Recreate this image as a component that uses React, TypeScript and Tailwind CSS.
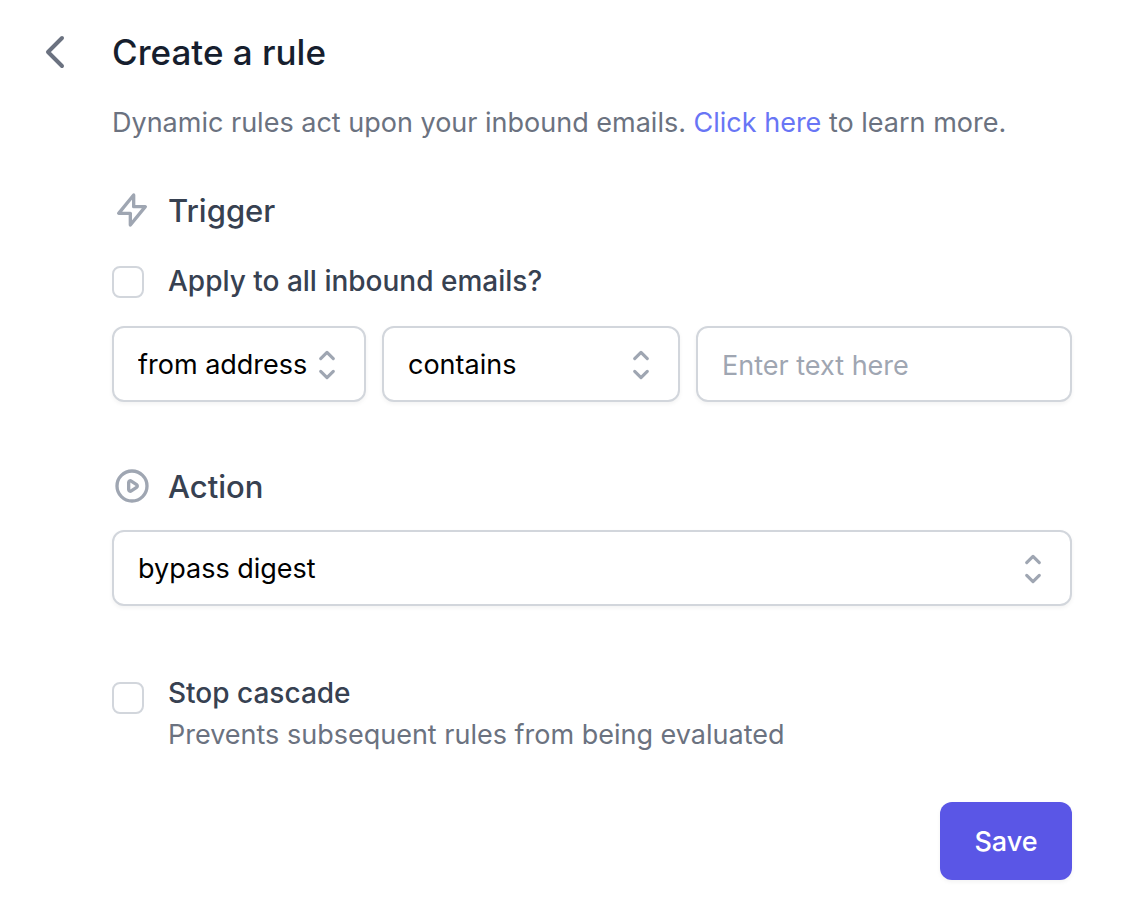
import React, { useState } from 'react';
import { clsx } from 'clsx';

const FIELD_CLASSES =
  'h-[76px] w-full rounded-xl border-2 border-[#d2d6dc] bg-white pt-0.5 pl-6 text-[27px] leading-10 shadow-[0_2px_4px_rgba(0,0,0,0.05)] focus:border-[#a4cafe] focus:outline-none';

interface IconProps {
  className?: string;
  viewBox?: string;
  strokeWidth?: number;
  d: string[];
}

const Icon: React.FC<IconProps> = ({ className, viewBox = '0 0 24 24', strokeWidth = 2, d }) => (
  <svg
    className={className}
    viewBox={viewBox}
    fill="none"
    stroke="currentColor"
    strokeWidth={strokeWidth}
    strokeLinecap="round"
    strokeLinejoin="round"
    aria-hidden="true"
  >
    {d.map((path) => (
      <path key={path} d={path} />
    ))}
  </svg>
);

const CHEVRON_LEFT = ['M15 19l-7-7 7-7'];
const LIGHTNING = ['M13 10V3L4 14h7v7l9-11h-7z'];
const PLAY = [
  'M14.752 11.168l-3.197-2.132A1 1 0 0010 9.87v4.263a1 1 0 001.555.832l3.197-2.132a1 1 0 000-1.664z',
  'M21 12a9 9 0 11-18 0 9 9 0 0118 0z',
];
const SELECTOR = ['M7 7l3-3 3 3m0 6l-3 3-3-3'];

interface SelectProps {
  label: string;
  options: string[];
  value: string;
  onChange: (value: string) => void;
  className?: string;
}

const Select: React.FC<SelectProps> = ({ label, options, value, onChange, className }) => (
  <div className={clsx('grid items-center', className)}>
    <select
      aria-label={label}
      value={value}
      onChange={(e) => onChange(e.target.value)}
      className={clsx(FIELD_CLASSES, 'col-start-1 row-start-1 appearance-none pr-12 text-black')}
    >
      {options.map((option) => (
        <option key={option} value={option}>
          {option}
        </option>
      ))}
    </select>
    <Icon
      className="pointer-events-none col-start-1 row-start-1 mt-0.5 mr-[18px] size-[42px] justify-self-end text-[#9fa6b2]"
      viewBox="0 0 20 20"
      strokeWidth={1.5}
      d={SELECTOR}
    />
  </div>
);

interface CheckboxProps {
  id: string;
  label: string;
  hint?: string;
  checked: boolean;
  onChange: (checked: boolean) => void;
  className?: string;
}

const Checkbox: React.FC<CheckboxProps> = ({ id, label, hint, checked, onChange, className }) => (
  <div className={clsx('flex items-start gap-6', className)}>
    <input
      id={id}
      type="checkbox"
      checked={checked}
      onChange={(e) => onChange(e.target.checked)}
      aria-describedby={hint ? `${id}-hint` : undefined}
      className={clsx(
        'size-8 shrink-0 appearance-none rounded-lg border-2 border-[#d2d6dc] bg-white checked:border-[#5a56e6] checked:bg-[#5a56e6]',
        hint ? 'mt-2.5' : 'mt-1.5'
      )}
    />
    <div className="leading-[42px]">
      <label htmlFor={id} className="block text-[28px] leading-[42px] font-medium text-[#374151]">
        {label}
      </label>
      {hint && (
        <p id={`${id}-hint`} className="text-[27px] leading-[42px] text-[#6b7280]">
          {hint}
        </p>
      )}
    </div>
  </div>
);

const SectionHeading: React.FC<{ icon: string[]; children: React.ReactNode }> = ({ icon, children }) => (
  <h2 className="flex items-start gap-4 text-[31px] leading-[42px] font-medium text-[#374151]">
    <Icon className="size-10 text-[#9fa6b2]" d={icon} />
    {children}
  </h2>
);

export default function App() {
  const [applyToAll, setApplyToAll] = useState(false);
  const [field, setField] = useState('from address');
  const [operator, setOperator] = useState('contains');
  const [text, setText] = useState('');
  const [action, setAction] = useState('bypass digest');
  const [stopCascade, setStopCascade] = useState(false);

  return (
    <main className="min-h-screen bg-white pt-7 pr-[68px] pb-10 pl-8 font-['Inter',sans-serif]">
      <header className="flex items-center gap-8">
        <button type="button" aria-label="Back" className="text-[#6b7280]">
          <Icon className="size-12" d={CHEVRON_LEFT} />
        </button>
        <h1 className="text-[35px] leading-12 font-medium text-[#161e2e]">Create a rule</h1>
      </header>

      <form className="pl-20" onSubmit={(e) => e.preventDefault()}>
        <p className="mt-[26px] text-[27px] leading-[42px] text-[#6b7280]">
          Dynamic rules act upon your inbound emails.{' '}
          <a href="#learn-more" className="text-[#6875f5]">
            Click here
          </a>{' '}
          to learn more.
        </p>

        <section className="mt-[46px]">
          <SectionHeading icon={LIGHTNING}>Trigger</SectionHeading>
          <Checkbox
            id="apply-to-all"
            label="Apply to all inbound emails?"
            checked={applyToAll}
            onChange={setApplyToAll}
            className="mt-7"
          />
          <div className="mt-6 flex gap-4">
            <Select
              label="Field"
              options={['from address', 'to address', 'subject']}
              value={field}
              onChange={setField}
              className="w-[254px] shrink-0"
            />
            <Select
              label="Condition"
              options={['contains', 'equals', 'starts with']}
              value={operator}
              onChange={setOperator}
              className="w-[298px] shrink-0"
            />
            <input
              type="text"
              aria-label="Text to match"
              placeholder="Enter text here"
              value={text}
              onChange={(e) => setText(e.target.value)}
              className={clsx(FIELD_CLASSES, 'min-w-0 flex-1 pr-6 placeholder:text-[#9fa6b2]')}
            />
          </div>
        </section>

        <section className="mt-16">
          <SectionHeading icon={PLAY}>Action</SectionHeading>
          <Select
            label="Action"
            options={['bypass digest', 'archive', 'delete']}
            value={action}
            onChange={setAction}
            className="mt-[22px]"
          />
        </section>

        <Checkbox
          id="stop-cascade"
          label="Stop cascade"
          hint="Prevents subsequent rules from being evaluated"
          checked={stopCascade}
          onChange={setStopCascade}
          className="mt-[66px]"
        />

        <div className="mt-[46px] flex justify-end">
          <button
            type="submit"
            className="h-[78px] w-[132px] rounded-xl bg-[#5a56e6] pt-0.5 text-[27px] leading-10 font-medium text-white shadow-[0_2px_4px_rgba(0,0,0,0.05)]"
          >
            Save
          </button>
        </div>
      </form>
    </main>
  );
}
